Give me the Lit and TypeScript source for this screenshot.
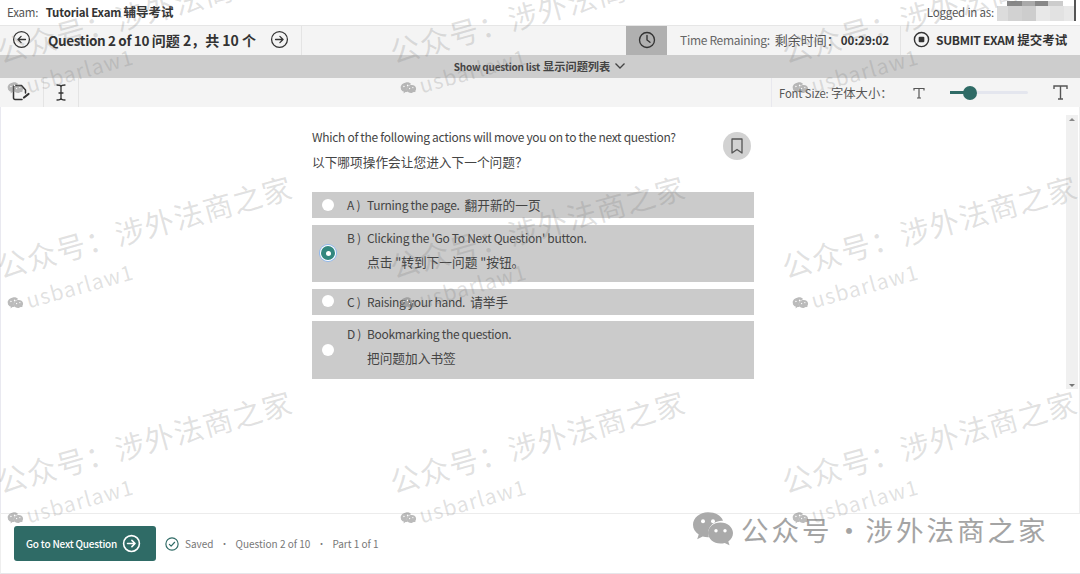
import { LitElement, html, css, svg } from "lit";
import { customElement } from "lit/decorators.js";

const arrowCircle = (dir: "l" | "r", size: number, sw = 1.6) => html`<svg width=${size} height=${size} viewBox="0 0 24 24" fill="none" stroke="currentColor" stroke-width=${sw} stroke-linecap="round" stroke-linejoin="round">
  <circle cx="12" cy="12" r="10"></circle>
  ${dir === "l"
    ? svg`<path d="M17 12H7.500M11.500 8l-4 4 4 4"></path>`
    : svg`<path d="M7 12h9.500M12.500 8l4 4-4 4"></path>`}
</svg>`;

const wechat = (size: number, color: string) => html`<svg width=${size} height=${size * 0.84} viewBox="0 0 40 33" fill=${color}>
  <path d="M15 0C6.700 0 0 5.600 0 12.500c0 4 2.200 7.400 5.700 9.700L4.200 27l5.500-2.900c1.600.5 3.400.8 5.300.8h.9c-.5-1.300-.8-2.700-.8-4.100 0-6.900 6.400-12.400 14.200-12.400h.7C28.300 3.400 22.200 0 15 0z"></path>
  <path d="M40 20.800c0-5.800-5.600-10.500-12.500-10.500S15 15 15 20.800s5.600 10.500 12.500 10.500c1.500 0 2.900-.2 4.200-.6l4.800 2.300-1.200-3.900c2.900-1.900 4.700-4.900 4.700-8.300z"></path>
  <circle cx="10" cy="9" r="2" fill="#fff"></circle><circle cx="20" cy="9" r="2" fill="#fff"></circle>
  <circle cx="23" cy="18.500" r="1.700" fill="#fff"></circle><circle cx="32" cy="18.500" r="1.700" fill="#fff"></circle>
</svg>`;

@customElement("app-root")
export class AppRoot extends LitElement {
  static styles = css`
    :host { display: block; width: 1080px; height: 574px; position: relative; overflow: hidden; background: #fff; font-family: "Noto Sans CJK SC", "Noto Sans", sans-serif; color: #3c3c3c; }
    * { box-sizing: border-box; }
    .page { display: flex; flex-direction: column; height: 574px; }
    .cn { letter-spacing: 0; }
    .top { height: 25px; display: flex; justify-content: space-between; align-items: center; padding: 0 86px 2px 7px; font-size: 11.500px; letter-spacing: -.2px; color: #555; flex: none; position: relative; }
    .top b { color: #333; font-weight: 700; margin-left: 5px; }
    .top b .cn { font-size: 12.500px; }
    .blur { position: absolute; left: 997px; top: 6px; width: 78px; height: 15px; background: linear-gradient(90deg, #dcdcdc 0 14%, #d2d2d2 14% 32%, #cdcdcd 32% 50%, #e8e8e8 50% 68%, #e2e2e2 68% 86%, #e8e8e8 86%); }
    .blur::before { content: ""; position: absolute; left: 10px; top: -5px; width: 56px; height: 5px; background: linear-gradient(90deg, #888 0 26%, #aaa 26% 50%, #888 50% 74%, #ccc 74%); }
    .blur::after { content: ""; position: absolute; left: 77px; top: -6px; width: 2px; height: 21px; background: #555; }
    .nav { height: 30px; flex: none; display: flex; align-items: stretch; background: #f4f4f4; border-top: 1px solid #e6e6e6; }
    .qnav { width: 302px; flex: none; display: flex; align-items: center; padding: 0 0 2px 12px; border-right: 1px solid #e4e4e4; color: #333; }
    .qtitle { font-size: 13.500px; font-weight: 700; margin: 0 17px; white-space: nowrap; width: 205px; color: #333; letter-spacing: -.35px; }
    .qtitle .cn { font-size: 14px; }
    .spacer { flex: 1; }
    .clock { width: 41px; flex: none; background: #b0b0b0; display: flex; align-items: center; justify-content: center; color: #333; padding-bottom: 1px; }
    .time { width: 234px; flex: none; display: flex; align-items: center; padding: 0 0 2px 13px; font-size: 12px; letter-spacing: -.3px; color: #666; border-right: 1px solid #e4e4e4; white-space: nowrap; }
    .time .cn { margin-left: 5px; color: #555; font-size: 13px; }
    .time b { margin-left: 1px; color: #333; font-size: 11.500px; letter-spacing: 0; }
    .submit { width: 179px; flex: none; display: flex; align-items: center; padding: 0 0 2px 12px; gap: 6px; font-size: 12px; letter-spacing: -.3px; font-weight: 700; color: #333; white-space: nowrap; }
    .submit .cn { font-size: 12.500px; }
    .list { height: 23px; flex: none; background: #cdcdcd; display: flex; align-items: center; justify-content: center; gap: 4px; font-size: 10px; letter-spacing: -.23px; font-weight: 700; color: #444; padding-bottom: 1px; }
    .list .cn { font-size: 11.200px; margin-left: 1px; }
    .tools { height: 29px; flex: none; display: flex; align-items: stretch; background: #f4f4f4; }
    .tool { display: flex; align-items: center; justify-content: center; border-right: 1px solid #e4e4e4; color: #333; }
    .tool.a { width: 44px; }
    .tool.b { width: 35px; }
    .font { width: 309px; display: flex; align-items: center; border-left: 1px solid #e8e8ee; padding-left: 7px; font-size: 11.200px; letter-spacing: -.1px; color: #555; white-space: nowrap; }
    .font .cn { font-size: 12.300px; }
    .fontlabel { width: 134px; }
    .track { width: 78px; height: 3px; background: #e4e6ee; margin: 0 25px; border-radius: 2px; position: relative; }
    .fill { width: 20px; height: 3px; background: #2f6b66; }
    .thumb { position: absolute; left: 13px; top: -5.500px; width: 14px; height: 14px; border-radius: 50%; background: #2f6b66; }
    main { flex: 1; border-left: 1px solid #e9e9f0; border-right: 1px solid #eee; display: flex; justify-content: center; position: relative; min-height: 0; padding-right: 14px; }
    .scroll { position: absolute; right: 1px; top: 8px; width: 12px; height: 274px; background: #f0f0f0; }
    .scroll::before { content: ""; position: absolute; left: 3px; top: 3px; border: 3px solid transparent; border-bottom: 3.500px solid #888; border-top: 0; }
    .scroll::after { content: ""; position: absolute; left: 3px; bottom: 2px; border: 3px solid transparent; border-top: 3.500px solid #777; border-bottom: 0; }
    .col { width: 442px; padding-top: 21px; position: relative; }
    .q1 { font-size: 12px; letter-spacing: -.3px; line-height: 17px; color: #444; white-space: nowrap; }
    .q2 { font-size: 12.700px; line-height: 19px; margin-top: 7px; color: #444; white-space: nowrap; }
    .mark { position: absolute; right: 3px; top: 25px; width: 28px; height: 28px; border-radius: 50%; background: #d2d2d2; display: flex; align-items: center; justify-content: center; color: #555; }
    .opts { display: flex; flex-direction: column; gap: 6.500px; margin-top: 21px; }
    .opt { background: #cbcbcb; display: flex; align-items: center; font-size: 12px; letter-spacing: -.3px; color: #444; }
    .opt.one { height: 26px; padding-bottom: 1px; }
    .opt.two { height: 57.500px; }
    .radio { width: 12px; height: 12px; border-radius: 50%; background: #fff; margin: 0 13px 0 10px; flex: none; }
    .radio.on { width: 14px; height: 14px; margin: 0 12px 0 9px; background: #32877f; box-shadow: 0 0 0 1px #fff, 0 0 0 2px #8fb8ee; display: flex; align-items: center; justify-content: center; }
    .radio.on::after { content: ""; width: 5px; height: 5px; border-radius: 50%; background: #fff; }
    .letter { width: 20px; flex: none; white-space: pre; }
    .body { white-space: nowrap; }
    .body .cn { margin-left: 5px; font-size: 12.700px; }
    .two .body { display: flex; flex-direction: column; gap: 6px; }
    .two .body .cn { margin-left: 0; line-height: 19px; }
    .two .wrap { display: grid; grid-template-columns: 20px auto; line-height: 17px; margin-bottom: 7px; }
    footer { height: 61px; flex: none; border-top: 1px solid #ececec; border-bottom: 1px solid #e6e6ea; border-left: 1px solid #eee; display: flex; align-items: center; padding-left: 13px; font-size: 10px; color: #777; position: relative; white-space: nowrap; }
    .next { width: 142px; height: 35px; background: #2f6b66; border-radius: 3px; color: #fff; display: flex; align-items: center; padding-left: 12px; gap: 5px; font-size: 10px; letter-spacing: -.2px; font-weight: 500; white-space: nowrap; }
    .saved { margin-left: 9px; color: #2f6b66; display: flex; }
    .stat { margin-left: 6px; }
    .dot { margin: 0 6.500px; font-size: 9px; }
    .brand { position: absolute; left: 692px; top: -5px; display: flex; align-items: center; gap: 8px; font-size: 27.500px; color: #a4a4a4; letter-spacing: 3px; white-space: nowrap; }
    .sep { display: inline-block; width: 33px; text-align: center; letter-spacing: 0; }
    .wm { position: absolute; inset: 0; pointer-events: none; }
    .mk { position: absolute; transform: rotate(-15.500deg); transform-origin: 0 0; white-space: nowrap; color: rgba(120,120,120,.22); }
    .mk .t { font-size: 29.500px; letter-spacing: 1px; line-height: 40px; display: block; }
    .mk .u { font-size: 21px; line-height: 26px; letter-spacing: 1px; display: flex; align-items: center; gap: 4px; margin-top: 7px; margin-left: 0; }
  `;

  private marks() {
    const out = [];
    for (const y of [32, 247, 462]) {
      for (const x of [-8, 385, 777]) {
        out.push(html`<div class="mk" style="left:${x}px;top:${y}px"><span class="t">公众号：涉外法商之家</span><span class="u">${wechat(15, "rgba(120,120,120,.5)")}usbarlaw1</span></div>`);
      }
    }
    return out;
  }

  render() {
    return html`<div class="page">
      <div class="top"><div>Exam: <b>Tutorial Exam <span class="cn">辅导考试</span></b></div><div>Logged in as:</div><div class="blur"></div></div>
      <div class="nav">
        <div class="qnav">${arrowCircle("l", 19)}<span class="qtitle">Question 2 of 10 <span class="cn">问题 2，共 10 个</span></span>${arrowCircle("r", 19)}</div>
        <div class="spacer"></div>
        <div class="clock"><svg width="18" height="18" viewBox="0 0 24 24" fill="none" stroke="currentColor" stroke-width="1.800" stroke-linecap="round"><circle cx="12" cy="12" r="10"></circle><path d="M12 6v6l4 3"></path></svg></div>
        <div class="time">Time Remaining:<span class="cn">剩余时间：</span><b>00:29:02</b></div>
        <div class="submit"><svg width="17" height="17" viewBox="0 0 24 24" fill="none" stroke="currentColor" stroke-width="2"><circle cx="12" cy="12" r="10"></circle><rect x="8" y="8" width="8" height="8" rx="1.500" fill="currentColor" stroke="none"></rect></svg><span>SUBMIT EXAM<span class="cn"> 提交考试</span></span></div>
      </div>
      <div class="list"><span>Show question list <span class="cn">显示问题列表</span></span><svg width="12" height="8" viewBox="0 0 12 8" fill="none" stroke="currentColor" stroke-width="1.300"><path d="M1.500 1.500 6 6l4.500-4.500"></path></svg></div>
      <div class="tools">
        <div class="tool a"><svg width="19" height="17" viewBox="0 0 19 17" fill="none" stroke="currentColor" stroke-width="1.500" stroke-linejoin="round" stroke-linecap="round"><path d="M10 15.500H3A1.500 1.500 0 0 1 1.500 14V3A1.500 1.500 0 0 1 3 1.500h6.500L13.500 6v3"></path><path d="M12 13.500l4.500-3.500" stroke-width="2.200"></path></svg></div>
        <div class="tool b"><svg width="10" height="17" viewBox="0 0 10 17" fill="none" stroke="currentColor" stroke-width="1.300" stroke-linecap="round"><path d="M1 1c2.500 0 4 .5 4 2v11c0 1.500-1.500 2-4 2M9 1C6.500 1 5 1.500 5 3v11c0 1.500 1.500 2 4 2M3 9h4"></path></svg></div>
        <div class="spacer"></div>
        <div class="font"><span class="fontlabel">Font Size: <span class="cn">字体大小：</span></span>
          <svg width="12" height="12" viewBox="0 0 12 12" fill="none" stroke="currentColor" stroke-width="1.200"><path d="M1 3.500V1.500h10v2M6 1.500v9.500M4 11h4"></path></svg>
          <div class="track"><div class="fill"></div><div class="thumb"></div></div>
          <svg width="15" height="15" viewBox="0 0 15 15" fill="none" stroke="currentColor" stroke-width="1.400"><path d="M1 4V1h13v3M7.500 1v13M5 14h5"></path></svg>
        </div>
      </div>
      <main>
        <div class="col">
          <div class="q1">Which of the following actions will move you on to the next question?</div>
          <div class="q2">以下哪项操作会让您进入下一个问题？</div>
          <div class="mark"><svg width="12" height="16" viewBox="0 0 12 16" fill="none" stroke="currentColor" stroke-width="1.300" stroke-linejoin="round"><path d="M1 1h10v14l-5-3.500L1 15z"></path></svg></div>
          <div class="opts">
            <div class="opt one"><span class="radio"></span><span class="letter">A )</span><span class="body">Turning the page.<span class="cn">翻开新的一页</span></span></div>
            <div class="opt two"><span class="radio on"></span><div class="wrap"><span class="letter">B )</span><span class="body"><span>Clicking the 'Go To Next Question' button.</span><span class="cn">点击 "转到下一问题 "按钮。</span></span></div></div>
            <div class="opt one"><span class="radio"></span><span class="letter">C )</span><span class="body">Raising your hand.<span class="cn">请举手</span></span></div>
            <div class="opt two"><span class="radio"></span><div class="wrap"><span class="letter">D )</span><span class="body"><span>Bookmarking the question.</span><span class="cn">把问题加入书签</span></span></div></div>
          </div>
        </div>
        <div class="scroll"></div>
      </main>
      <footer>
        <div class="next">Go to Next Question ${arrowCircle("r", 19, 2)}</div>
        <span class="saved"><svg width="14" height="14" viewBox="0 0 24 24" fill="none" stroke="currentColor" stroke-width="2" stroke-linecap="round" stroke-linejoin="round"><circle cx="12" cy="12" r="10.500"></circle><path d="M7.500 12.500l3 3 6-6.500"></path></svg></span>
        <span class="stat">Saved</span><span class="dot">•</span><span>Question 2 of 10</span><span class="dot">•</span><span>Part 1 of 1</span>
        <div class="brand">${wechat(40, "#aaaaaa")}<span>公众号<span class="sep">·</span>涉外法商之家</span></div>
      </footer>
    </div>
    <div class="wm">${this.marks()}</div>`;
  }
}
